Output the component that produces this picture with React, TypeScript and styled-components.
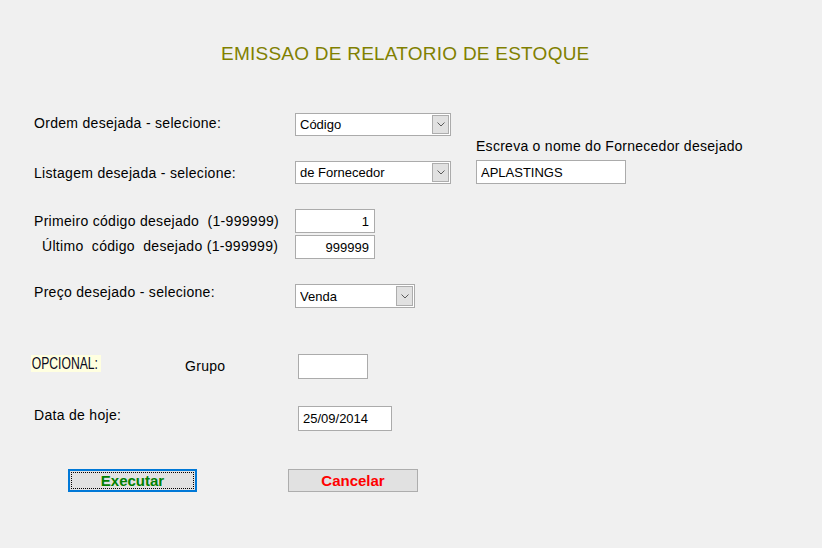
import React from "react";
import styled, { createGlobalStyle } from "styled-components";

const GlobalStyle = createGlobalStyle`
  *, *::before, *::after { box-sizing: border-box; }
  html, body { margin: 0; padding: 0; background: #f0f0f0; }
  body {
    font-family: "Liberation Sans", Arial, sans-serif;
    color: #000;
    width: 822px;
    height: 548px;
    overflow: hidden;
  }
`;

const Page = styled.form`
  display: flex;
  flex-direction: column;
  padding-left: 34px;
`;

const Title = styled.h1`
  margin: 43px 0 0 187px;
  height: 22px;
  line-height: 22px;
  font-size: 19px;
  font-weight: normal;
  letter-spacing: 0.24px;
  color: #808000;
  white-space: nowrap;
`;

const TopSection = styled.div`
  display: flex;
  margin-top: 48px;
`;

const LeftCol = styled.div`
  display: flex;
  flex-direction: column;
  width: 442px;
`;

const RightCol = styled.div`
  display: flex;
  flex-direction: column;
  padding-top: 25px;
`;

const Row = styled.div<{ $mt?: number }>`
  display: flex;
  align-items: center;
  margin-top: ${(p) => p.$mt ?? 0}px;
`;

const Label = styled.label<{ $w: number; $indent?: number; $lift?: number }>`
  width: ${(p) => p.$w}px;
  padding-left: ${(p) => p.$indent ?? 0}px;
  font-size: 14px;
  letter-spacing: 0.3px;
  line-height: 16px;
  white-space: nowrap;
  position: relative;
  top: ${(p) => -(p.$lift ?? 0)}px;
`;

const TopLabel = styled.label`
  font-size: 14px;
  letter-spacing: 0.27px;
  line-height: 16px;
  white-space: nowrap;
`;

const SelectBox = styled.div<{ $w: number; $h: number }>`
  display: flex;
  align-items: stretch;
  width: ${(p) => p.$w}px;
  height: ${(p) => p.$h}px;
  border: 1px solid #ababab;
  background: #fff;
  padding: 1px;
`;

const NativeSelect = styled.select`
  flex: 1;
  min-width: 0;
  appearance: none;
  -webkit-appearance: none;
  border: none;
  outline: none;
  background: transparent;
  font-family: "Liberation Sans", Arial, sans-serif;
  font-size: 13px;
  color: #000;
  padding: 0 0 0 3px;
  margin: 0;
`;

const ArrowBox = styled.span`
  display: flex;
  align-items: center;
  justify-content: center;
  width: 17px;
  background: #e1e1e1;
  border: 1px solid #adadad;
  pointer-events: none;
`;

const TextInput = styled.input<{ $w: number; $h: number; $align?: string; $mt?: number }>`
  width: ${(p) => p.$w}px;
  height: ${(p) => p.$h}px;
  margin: ${(p) => p.$mt ?? 0}px 0 0 0;
  border: 1px solid #ababab;
  background: #fff;
  font-family: "Liberation Sans", Arial, sans-serif;
  font-size: 13px;
  color: #000;
  text-align: ${(p) => p.$align ?? "left"};
  padding: 0 5px 0 4px;
  outline: none;
`;

const OptionalTag = styled.div`
  align-self: flex-start;
  margin: 1px 0 0 -3px;
  width: 70px;
  height: 17px;
  background: #ffffe0;
  overflow: hidden;
  white-space: nowrap;
`;

const OptionalText = styled.span`
  display: inline-block;
  font-size: 16px;
  line-height: 18px;
  padding-left: 1px;
  color: #0a0a20;
  transform: scaleX(0.76);
  transform-origin: left center;
`;

const GroupLabel = styled.label`
  margin-left: 84px;
  width: 113px;
  font-size: 14px;
  letter-spacing: 0.3px;
  line-height: 16px;
  position: relative;
  top: -1px;
`;

const ButtonRow = styled.div`
  display: flex;
  margin-top: 38px;
`;

const Button = styled.button<{ $color: string; $ml: number; $w: number; $focused?: boolean }>`
  margin-left: ${(p) => p.$ml}px;
  width: ${(p) => p.$w}px;
  height: 23px;
  background: #e1e1e1;
  border: ${(p) => (p.$focused ? "2px solid #0078d7" : "1px solid #adadad")};
  outline: ${(p) => (p.$focused ? "1px dotted #000" : "none")};
  outline-offset: -4px;
  font-family: "Liberation Sans", Arial, sans-serif;
  font-size: 15px;
  font-weight: bold;
  color: ${(p) => p.$color};
  padding: 0;
  line-height: 17px;
  cursor: pointer;
`;

const Chevron = () => (
  <svg width="8" height="5" viewBox="0 0 8 5">
    <path d="M0.5 0.5 L4 4 L7.5 0.5" fill="none" stroke="#5a5a5a" strokeWidth="1" />
  </svg>
);

const Select = ({ w, h, options, value }: { w: number; h: number; options: string[]; value: string }) => (
  <SelectBox $w={w} $h={h}>
    <NativeSelect defaultValue={value}>
      {options.map((o) => (
        <option key={o} value={o}>
          {o}
        </option>
      ))}
    </NativeSelect>
    <ArrowBox>
      <Chevron />
    </ArrowBox>
  </SelectBox>
);

export default function App() {
  return (
    <>
      <GlobalStyle />
      <Page onSubmit={(e) => e.preventDefault()}>
        <Title>EMISSAO DE RELATORIO DE ESTOQUE</Title>
        <TopSection>
          <LeftCol>
            <Row>
              <Label $w={261} $lift={2}>Ordem desejada - selecione:</Label>
              <Select w={156} h={23} value="Código" options={["Código", "Descrição", "Referência"]} />
            </Row>
            <Row $mt={25}>
              <Label $w={261}>Listagem desejada - selecione:</Label>
              <Select w={156} h={23} value="de Fornecedor" options={["Geral", "de Fornecedor", "de Grupo"]} />
            </Row>
          </LeftCol>
          <RightCol>
            <TopLabel>Escreva o nome do Fornecedor desejado</TopLabel>
            <TextInput $w={150} $h={24} $mt={6} defaultValue="APLASTINGS" />
          </RightCol>
        </TopSection>
        <Row $mt={25}>
          <Label $w={261}>Primeiro código desejado&nbsp; (1-999999)</Label>
          <TextInput $w={80} $h={24} $align="right" defaultValue="1" />
        </Row>
        <Row $mt={2}>
          <Label $w={261} $indent={8} $lift={1}>
            Último&nbsp; código&nbsp; desejado (1-999999)
          </Label>
          <TextInput $w={80} $h={24} $align="right" defaultValue="999999" />
        </Row>
        <Row $mt={25}>
          <Label $w={261} $lift={4}>Preço desejado - selecione:</Label>
          <Select w={120} h={24} value="Venda" options={["Venda", "Custo"]} />
        </Row>
        <Row $mt={46}>
          <OptionalTag>
            <OptionalText>OPCIONAL:</OptionalText>
          </OptionalTag>
          <GroupLabel>Grupo</GroupLabel>
          <TextInput $w={70} $h={25} defaultValue="" />
        </Row>
        <Row $mt={27}>
          <Label $w={264} $lift={4}>Data de hoje:</Label>
          <TextInput $w={94} $h={25} defaultValue="25/09/2014" />
        </Row>
        <ButtonRow>
          <Button type="submit" $color="#008000" $ml={34} $w={129} $focused>
            Executar
          </Button>
          <Button type="button" $color="#ff0000" $ml={91} $w={130}>
            Cancelar
          </Button>
        </ButtonRow>
      </Page>
    </>
  );
}
